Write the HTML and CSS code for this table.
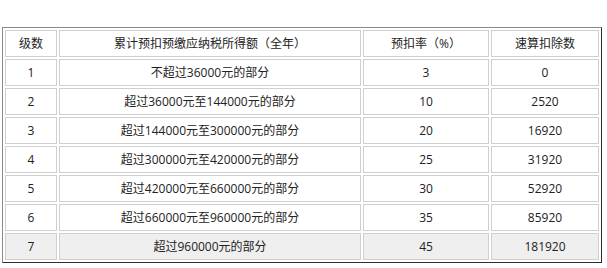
FILE: index.html
```html
<!DOCTYPE html>
<html lang="zh-CN">
<head>
<meta charset="utf-8">
<title>个人所得税预扣率表</title>
<link rel="stylesheet" href="styles.css">
</head>
<body>
<div class="page">
  <table class="tax-table">
    <colgroup>
      <col class="c-level">
      <col class="c-range">
      <col class="c-rate">
      <col class="c-deduct">
    </colgroup>
    <tbody>
      <tr><td>级数</td><td>累计预扣预缴应纳税所得额（全年）</td><td>预扣率（%）</td><td>速算扣除数</td></tr>
      <tr><td>1</td><td>不超过36000元的部分</td><td>3</td><td>0</td></tr>
      <tr><td>2</td><td>超过36000元至144000元的部分</td><td>10</td><td>2520</td></tr>
      <tr><td>3</td><td>超过144000元至300000元的部分</td><td>20</td><td>16920</td></tr>
      <tr><td>4</td><td>超过300000元至420000元的部分</td><td>25</td><td>31920</td></tr>
      <tr><td>5</td><td>超过420000元至660000元的部分</td><td>30</td><td>52920</td></tr>
      <tr><td>6</td><td>超过660000元至960000元的部分</td><td>35</td><td>85920</td></tr>
      <tr class="row-last"><td>7</td><td>超过960000元的部分</td><td>45</td><td>181920</td></tr>
    </tbody>
  </table>
</div>
</body>
</html>
```

FILE: styles.css
```css
html, body {
  margin: 0;
  padding: 0;
  background: #ffffff;
}

.page {
  padding: 27px 0 0 2px;
}

.tax-table {
  width: 600px;
  table-layout: fixed;
  border-collapse: separate;
  border-spacing: 2px;
  border-style: solid;
  border-width: 1px;
  border-color: #8a8a8a #2e2e2e #2e2e2e #8a8a8a;
  font-family: "Open Sans", "Noto Sans CJK SC", sans-serif;
  font-size: 12px;
  color: #222;
}

.c-level { width: 52px; }
.c-range { width: 302px; }
.c-rate { width: 126px; }
.c-deduct { width: 108px; }

.tax-table td {
  border: 1px solid #cfcfcf;
  padding: 0;
  height: 25px;
  line-height: 25px;
  text-align: center;
  white-space: nowrap;
}

.row-last td {
  background: #efefef;
}
```
